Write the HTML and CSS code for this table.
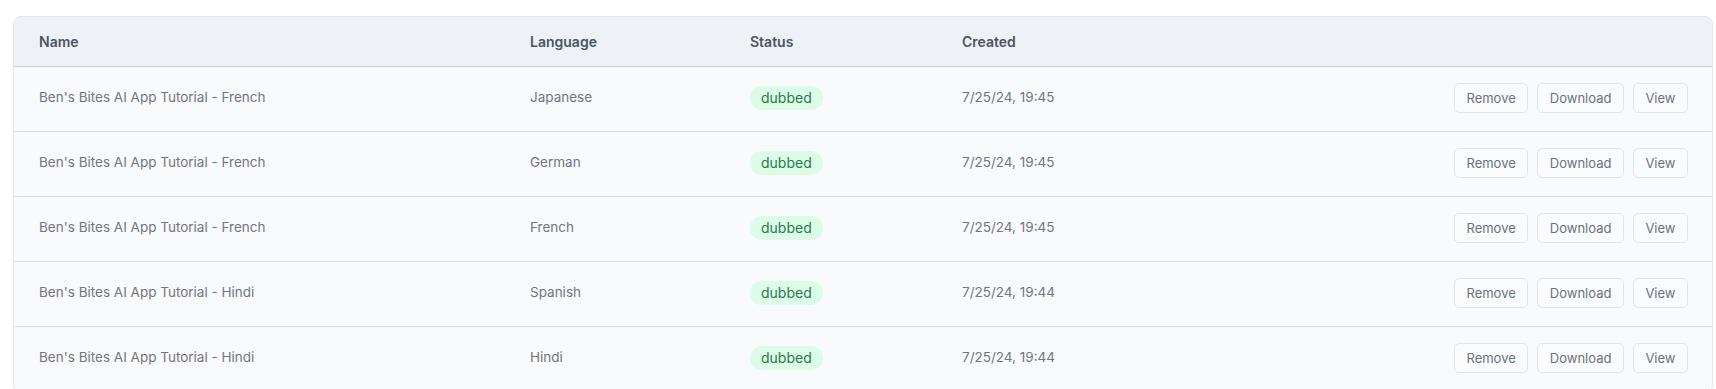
FILE: index.html
```html
<!DOCTYPE html>
<html lang="en">
<head>
<meta charset="utf-8">
<title>Dubs</title>
<link rel="stylesheet" href="styles.css">
</head>
<body>
<div class="page">
  <div class="table">
    <div class="row head">
      <div class="cell">Name</div>
      <div class="cell">Language</div>
      <div class="cell">Status</div>
      <div class="cell">Created</div>
      <div class="cell"></div>
    </div>
    <div class="row">
      <div class="cell text">Ben's Bites AI App Tutorial - French</div>
      <div class="cell text">Japanese</div>
      <div class="cell"><span class="badge">dubbed</span></div>
      <div class="cell text">7/25/24, 19:45</div>
      <div class="cell actions"><button class="btn">Remove</button><button class="btn">Download</button><button class="btn">View</button></div>
    </div>
    <div class="row">
      <div class="cell text">Ben's Bites AI App Tutorial - French</div>
      <div class="cell text">German</div>
      <div class="cell"><span class="badge">dubbed</span></div>
      <div class="cell text">7/25/24, 19:45</div>
      <div class="cell actions"><button class="btn">Remove</button><button class="btn">Download</button><button class="btn">View</button></div>
    </div>
    <div class="row">
      <div class="cell text">Ben's Bites AI App Tutorial - French</div>
      <div class="cell text">French</div>
      <div class="cell"><span class="badge">dubbed</span></div>
      <div class="cell text">7/25/24, 19:45</div>
      <div class="cell actions"><button class="btn">Remove</button><button class="btn">Download</button><button class="btn">View</button></div>
    </div>
    <div class="row">
      <div class="cell text">Ben's Bites AI App Tutorial - Hindi</div>
      <div class="cell text">Spanish</div>
      <div class="cell"><span class="badge">dubbed</span></div>
      <div class="cell text">7/25/24, 19:44</div>
      <div class="cell actions"><button class="btn">Remove</button><button class="btn">Download</button><button class="btn">View</button></div>
    </div>
    <div class="row">
      <div class="cell text">Ben's Bites AI App Tutorial - Hindi</div>
      <div class="cell text">Hindi</div>
      <div class="cell"><span class="badge">dubbed</span></div>
      <div class="cell text">7/25/24, 19:44</div>
      <div class="cell actions"><button class="btn">Remove</button><button class="btn">Download</button><button class="btn">View</button></div>
    </div>
  </div>
</div>
</body>
</html>
```
FILE: styles.css
```css
* { box-sizing: border-box; }
html, body { margin: 0; background: #ffffff; }
body {
  font-family: Inter, "Noto Sans", "Liberation Sans", sans-serif;
  font-size: 13.5px;
  color: #71767f;
}
.page {
  padding: 16px 3px 0 13px;
}
.table {
  border: 1px solid #e3e6ea;
  border-radius: 8px;
  overflow: hidden;
  background: #f9fafb;
}
.row {
  display: grid;
  grid-template-columns: 491px 220px 212px 1fr auto;
  align-items: center;
  height: 65px;
  padding: 0 24px 2px 25px;
  border-bottom: 1px solid #d9dde2;
}
.row.head {
  height: 50px;
  padding-bottom: 0;
  background: #eef1f5;
  border-bottom-color: #c4c9d3;
  color: #4b5563;
  font-size: 14px;
  font-weight: 600;
}
.cell {
  white-space: nowrap;
}
.cell.text {
  padding-bottom: 3px;
}
.badge {
  display: inline-block;
  height: 24px;
  line-height: 24px;
  padding: 0 11px;
  border-radius: 12px;
  background: #dcfce7;
  color: #2a7a4e;
  font-size: 14px;
}
.actions {
  display: flex;
  gap: 9px;
  justify-content: flex-end;
}
.btn {
  font-family: inherit;
  font-size: 13px;
  color: #6b7280;
  background: #fafbfc;
  border: 1px solid #e2e5ea;
  border-radius: 5px;
  height: 30px;
  padding: 0 11.5px;
  cursor: pointer;
}
```
